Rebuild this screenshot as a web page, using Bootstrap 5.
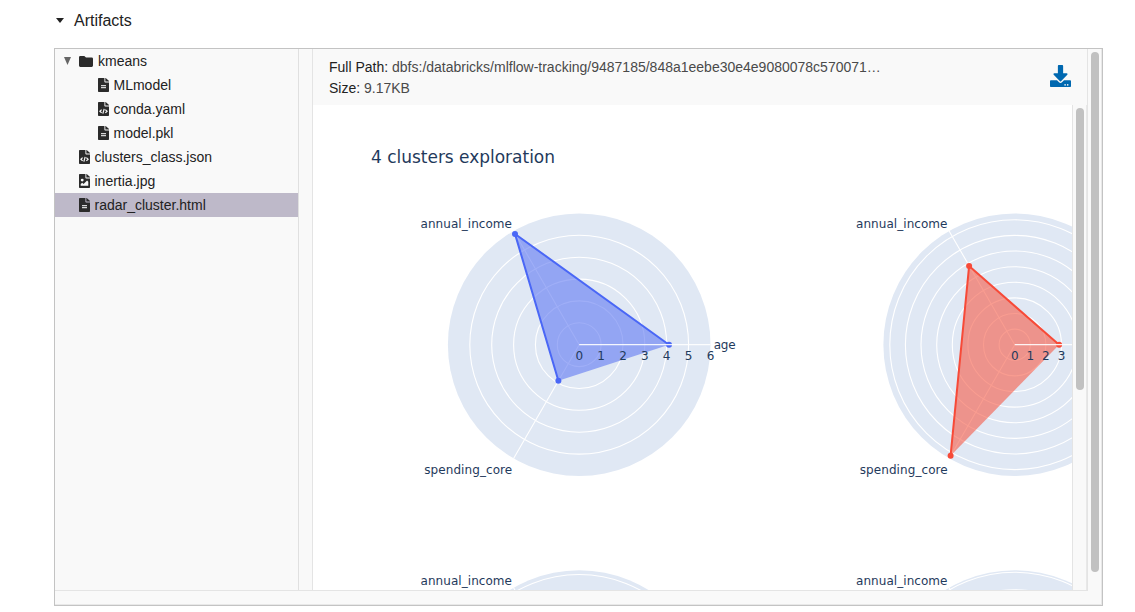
<!DOCTYPE html>
<html lang="en">
<head>
<meta charset="utf-8">
<title>Artifacts</title>
<link href="https://cdn.jsdelivr.net/npm/bootstrap@5.3.0/dist/css/bootstrap.min.css" rel="stylesheet">
<style>
body{font-family:"Liberation Sans",Arial,sans-serif;font-size:14px;color:#222;height:612px}
.section-head{height:41px;padding-left:56px;font-size:16px;line-height:20px}
.section-head span{margin-left:10px}
.artifact-box{width:1049px;height:558px;margin:7px 0 0 54px;border:1px solid #c3c3c3;background:#f9f9f9;box-shadow:inset -1px -1px #e8e8e8}
.main-area{width:1033px;height:542px;border-right:1px solid #e4e4e4;border-bottom:1px solid #e4e4e4}
.tree{width:244px;border-right:1px solid #e0e0e0}
.gutter{width:14px;border-right:1px solid #e4e4e4}
.tree-row{height:24px;line-height:24px;padding-left:24px;white-space:nowrap}
.tree-row.root{padding-left:9px}
.tree-row.child{padding-left:43px}
.tree-row.chosen{background:#beb9c9}
.tree-row svg{fill:#2b2b2b;margin-right:4.5px}
.tree-row.root svg{margin-right:5px}
.tree-row.root svg.toggle{margin-right:8px}
.file-head{height:56px;padding:8px 16px;line-height:21px}
.file-head .value{color:#4a4a4a}
.file-head svg{fill:#0068b0;margin:8px 0 0}
.plot{width:759px;height:485px;background:#fff;font-family:"DejaVu Sans",Verdana,sans-serif;font-size:12px}
.plot text{fill:#1f3a5c}
.inner-track{width:15px;border-left:1px solid #e4e4e4;border-right:1px solid #e8e8e8;padding:3px 0 0 3px}
.outer-track{width:14px;padding:3px 0 0 3px}
.thumb{width:8px;border-radius:4px;background:#c1c1c1}
.disc{fill:#e0e8f4}
.grid{fill:none;stroke:#fff;stroke-width:1.1}
</style>
<script src="https://cdn.jsdelivr.net/npm/bootstrap@5.3.0/dist/js/bootstrap.bundle.min.js"></script>
</head>
<body class="overflow-hidden bg-white">
<svg class="d-none">
  <symbol id="doc" viewBox="0 0 384 512"><path d="M224 136V0H24C11 0 0 11 0 24v464c0 13 11 24 24 24h336c13 0 24-11 24-24V160H248c-13 0-24-11-24-24zM384 122v6H256V0h6c6 0 13 3 17 7l98 98c4 4 7 11 7 17z"/></symbol>
  <symbol id="doc-text" viewBox="0 0 384 512"><use href="#doc"/><path d="M105 274h174M105 347h174" stroke="#d6d6d6" stroke-width="36.600"/><path d="M105 311h174M105 384h174" stroke="#555" stroke-width="36.600"/></symbol>
  <symbol id="doc-code" viewBox="0 0 384 512"><use href="#doc"/><path d="M126 280l-60 58 60 58M258 280l60 58-60 58M216 252l-46 172" fill="none" stroke="#f9f9f9" stroke-width="42"/></symbol>
  <symbol id="doc-image" viewBox="0 0 384 512"><use href="#doc"/><circle cx="112" cy="220" r="50" fill="#f9f9f9"/><path d="M60 430v-64l52-50 48 48 122-124 42 42v148z" fill="#f9f9f9"/></symbol>
</svg>

<div class="section-head d-flex align-items-center">
  <svg width="8" height="5" viewBox="0 0 8 5"><path d="M0 0h8L4 5z" fill="#222"/></svg>
  <span>Artifacts</span>
</div>

<div class="artifact-box d-flex">
  <div class="main-area d-flex flex-shrink-0">
    <div class="tree flex-shrink-0">
      <div class="tree-row root d-flex align-items-center"><svg class="toggle" width="7" height="8" viewBox="0 0 7 8"><path d="M0 0h7L3.5 8z" style="fill:#666"/></svg><svg width="14" height="11" viewBox="0 0 14 11"><path d="M1.3 0h4l1.7 1.5h5.7Q14 1.5 14 2.8v6.8q0 1.3-1.3 1.3H1.3Q0 10.9 0 9.6V1.3Q0 0 1.3 0z"/></svg><span>kmeans</span></div>
      <div class="tree-row child d-flex align-items-center"><svg width="11" height="14" viewBox="0 0 384 512" preserveAspectRatio="none"><use href="#doc-text" width="384" height="512"/></svg><span>MLmodel</span></div>
      <div class="tree-row child d-flex align-items-center"><svg width="11" height="14" viewBox="0 0 384 512" preserveAspectRatio="none"><use href="#doc-code" width="384" height="512"/></svg><span>conda.yaml</span></div>
      <div class="tree-row child d-flex align-items-center"><svg width="11" height="14" viewBox="0 0 384 512" preserveAspectRatio="none"><use href="#doc-text" width="384" height="512"/></svg><span>model.pkl</span></div>
      <div class="tree-row d-flex align-items-center"><svg width="11" height="14" viewBox="0 0 384 512" preserveAspectRatio="none"><use href="#doc-code" width="384" height="512"/></svg><span>clusters_class.json</span></div>
      <div class="tree-row d-flex align-items-center"><svg width="11" height="14" viewBox="0 0 384 512" preserveAspectRatio="none"><use href="#doc-image" width="384" height="512"/></svg><span>inertia.jpg</span></div>
      <div class="tree-row chosen d-flex align-items-center"><svg width="11" height="14" viewBox="0 0 384 512" preserveAspectRatio="none"><use href="#doc-text" width="384" height="512"/></svg><span>radar_cluster.html</span></div>
    </div>
    <div class="gutter flex-shrink-0"></div>
    <div class="d-flex flex-column flex-grow-1">
      <div class="file-head d-flex justify-content-between align-items-start">
        <div class="text-nowrap">
          <div>Full Path: <span class="value">dbfs:/databricks/mlflow-tracking/9487185/848a1eebe30e4e9080078c570071…</span></div>
          <div>Size: <span class="value">9.17KB</span></div>
        </div>
        <svg width="21" height="22" viewBox="0 0 512 512" preserveAspectRatio="none"><path d="M216 0h80c13.300 0 24 10.700 24 24v168h87.700c17.800 0 26.700 21.500 14.100 34.100L269.700 378.300c-7.500 7.500-19.800 7.500-27.300 0L90.100 226.100c-12.600-12.600-3.700-34.100 14.100-34.100H192V24c0-13.300 10.700-24 24-24zm296 376v112c0 13.300-10.700 24-24 24H24c-13.300 0-24-10.700-24-24V376c0-13.300 10.700-24 24-24h146.700l49 49c20.100 20.100 52.500 20.100 72.600 0l49-49H488c13.300 0 24 10.700 24 24zm-124 88c0-11-9-20-20-20s-20 9-20 20 9 20 20 20 20-9 20-20zm64 0c0-11-9-20-20-20s-20 9-20 20 9 20 20 20 20-9 20-20z"/></svg>
      </div>
      <div class="d-flex">
        <svg class="plot flex-shrink-0" viewBox="0 0 759 485">
          <text x="58" y="58" font-size="17" textLength="184">4 clusters exploration</text>
          <g transform="translate(266.200 239.700)">
            <circle class="disc" r="131.300"/>
            <g class="grid"><circle r="21.900"/><circle r="43.800"/><circle r="65.600"/><circle r="87.500"/><circle r="109.400"/><path d="M0 0L-65.600-113.700M0 0L-65.600 113.700"/></g>
            <path d="M89.800 0L-64.200-110.800L-20.800 36z" fill="#5f78f2" fill-opacity=".6"/>
            <path d="M89.800 0L-64.200-110.800L-20.800 36" fill="none" stroke="#4a67f6" stroke-width="2"/>
            <g fill="#4a67f6"><circle cx="89.800" r="3"/><circle cx="-64.200" cy="-110.800" r="3"/><circle cx="-20.800" cy="36" r="3"/></g>
            <path d="M0 0H131.300" stroke="#fff" stroke-opacity=".9" stroke-width="1.300"/>
            <g text-anchor="middle"><text y="15.500">0</text><text x="21.900" y="15.500">1</text><text x="43.800" y="15.500">2</text><text x="65.600" y="15.500">3</text><text x="87.500" y="15.500">4</text><text x="109.400" y="15.500">5</text><text x="131.300" y="15.500">6</text></g>
            <text x="134.500" y="4.500" textLength="22">age</text>
            <text x="-158.700" y="-116.500" textLength="91.500">annual_income</text>
            <text x="-155" y="129.500" textLength="88">spending_core</text>
          </g>
          <g transform="translate(701.700 239.700)">
            <circle class="disc" r="131.300"/>
            <g class="grid"><circle r="15.600"/><circle r="31.200"/><circle r="46.800"/><circle r="62.400"/><circle r="78"/><circle r="93.700"/><circle r="109.300"/><circle r="124.900"/><path d="M0 0L-65.600-113.700M0 0L-65.600 113.700"/></g>
            <path d="M44.400 0L-45.600-78.600L-64.100 111z" fill="#f55a46" fill-opacity=".6"/>
            <path d="M44.400 0L-45.600-78.600L-64.100 111" fill="none" stroke="#f74a38" stroke-width="2"/>
            <g fill="#f74a38"><circle cx="44.400" r="3"/><circle cx="-45.600" cy="-78.600" r="3"/><circle cx="-64.100" cy="111" r="3"/></g>
            <path d="M0 0H131.300" stroke="#fff" stroke-opacity=".9" stroke-width="1.300"/>
            <g text-anchor="middle"><text y="15.500">0</text><text x="15.600" y="15.500">1</text><text x="31.200" y="15.500">2</text><text x="46.800" y="15.500">3</text></g>
            <text x="-158.700" y="-116.500" textLength="91.500">annual_income</text>
            <text x="-155" y="129.500" textLength="88">spending_core</text>
          </g>
          <g transform="translate(266.200 596.500)">
            <circle class="disc" r="131.300"/><g class="grid"><circle r="127"/><path d="M0 0L-65.600-113.700"/></g>
            <text x="-158.700" y="-116.500" textLength="91.500">annual_income</text>
          </g>
          <g transform="translate(701.700 596.500)">
            <circle class="disc" r="131.300"/><g class="grid"><circle r="129.300"/><circle r="111.800"/><path d="M0 0L-65.600-113.700"/></g>
            <text x="-158.700" y="-116.500" textLength="91.500">annual_income</text>
          </g>
        </svg>
        <div class="inner-track"><div class="thumb" style="height:282px"></div></div>
      </div>
    </div>
  </div>
  <div class="outer-track flex-grow-1"><div class="thumb" style="height:520px"></div></div>
</div>
</body>
</html>
